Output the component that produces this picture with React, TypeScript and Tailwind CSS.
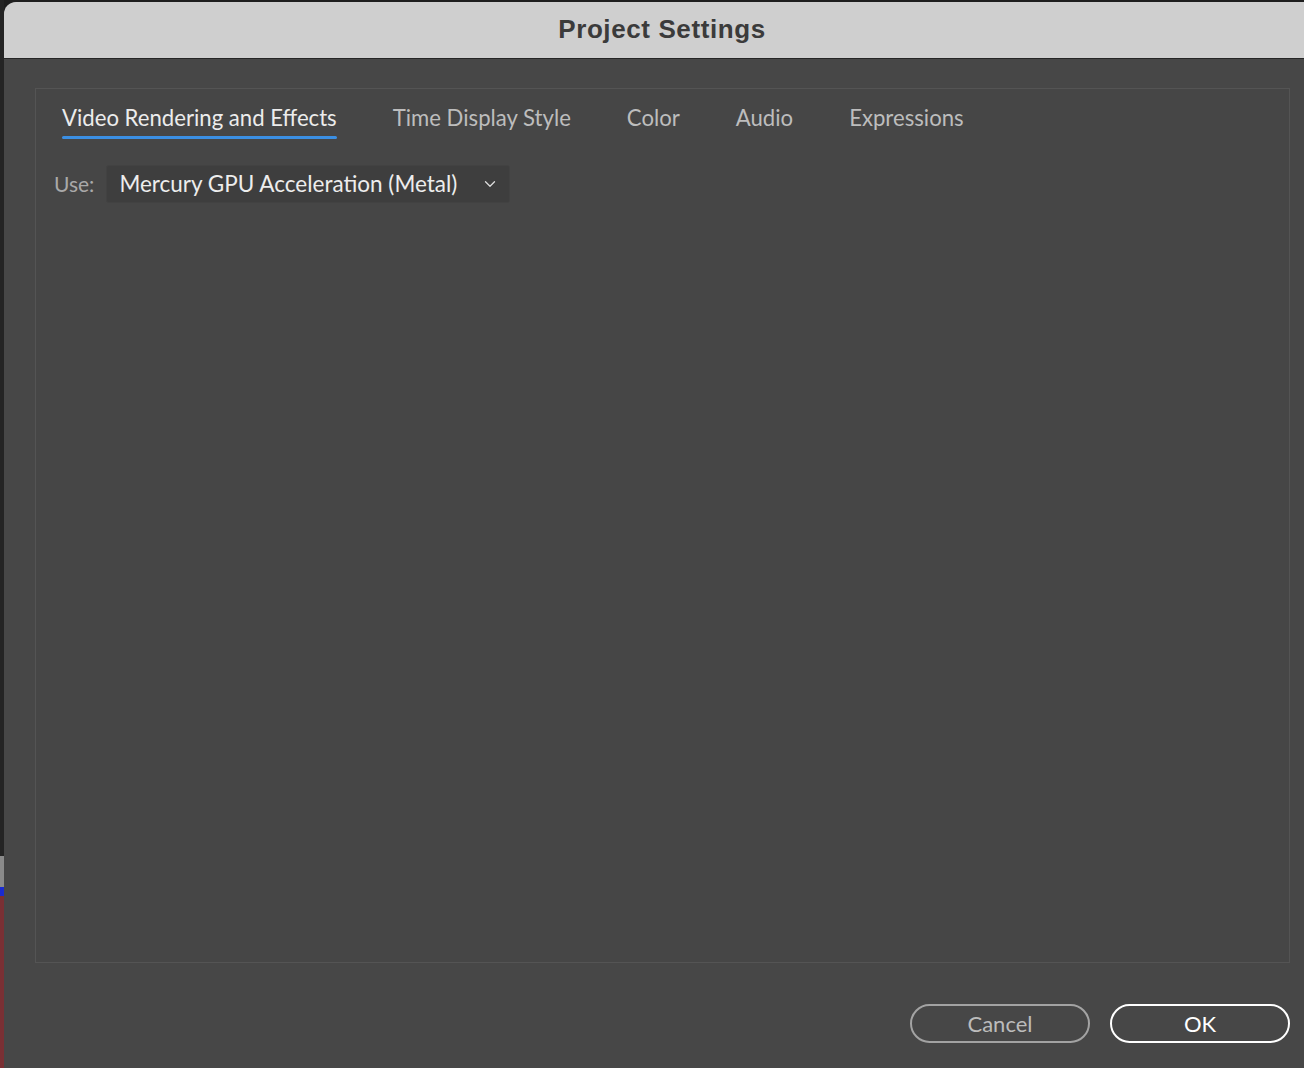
import { ChevronDown } from "lucide-react";

const TABS = ["Video Rendering and Effects", "Time Display Style", "Color", "Audio", "Expressions"];

export default function App() {
  return (
    <div className="flex h-[1068px] w-[1304px] overflow-hidden bg-[#1e1e1e] font-['Lato',sans-serif]">
      {/* background app peeking through on the left */}
      <div className="flex w-[4px] shrink-0 flex-col">
        <div className="h-[856px] bg-[#242424]" />
        <div className="h-[31px] bg-[#8a8a8a]" />
        <div className="h-[9px] bg-[#1a2bd0]" />
        <div className="flex-1 bg-[#7a3034]" />
      </div>

      <div className="mt-[2px] flex flex-1 flex-col overflow-hidden rounded-tl-[12px] bg-[#474747]">
        <div className="flex h-[57px] shrink-0 items-center justify-center border-b border-[#262626] bg-[#cfcfcf] pb-[2px] pl-[16px]">
          <span className="font-['Liberation_Sans',sans-serif] text-[26px] font-bold tracking-[0.6px] text-[#3b3b3b]">Project Settings</span>
        </div>

        <div className="flex flex-1 flex-col pl-[31px] pr-[14px] pt-[29px]">
          <div className="flex h-[875px] flex-col border border-[#545454] bg-[#464646] px-[26px] pt-[14px]">
            <div className="flex gap-[56px]">
              {TABS.map((t, i) => (
                <div key={t} className="flex flex-col">
                  <span className={i === 0 ? "text-[22.15px] leading-[30px] text-[#ececec]" : "text-[22.15px] leading-[30px] text-[#bdbdbd]"}>{t}</span>
                  <div className={i === 0 ? "mt-[3px] h-[3px] rounded-full bg-[#3b8fe3]" : "mt-[3px] h-[3px]"} />
                </div>
              ))}
            </div>

            <div className="-ml-[8px] mt-[26px] flex items-center">
              <span className="text-[21px] text-[#a9a9a9]">Use:</span>
              <div className="ml-[12px] flex h-[38px] w-[404px] items-center rounded-[3px] border border-[#424242] bg-[#3e3e3e] pl-[12px] pr-[10px]">
                <span className="flex-1 text-[22.5px] text-[#ededed]">Mercury GPU Acceleration (Metal)</span>
                <ChevronDown className="size-[18px] text-[#dcdcdc]" strokeWidth={1.75} />
              </div>
            </div>
          </div>

          <div className="mt-[41px] flex justify-end gap-[20px]">
            <button className="flex h-[39px] w-[180px] items-center justify-center rounded-full border-2 border-[#a3a3a3] text-[22px] text-[#bcbcbc]">Cancel</button>
            <button className="flex h-[39px] w-[180px] items-center justify-center rounded-full border-2 border-white text-[22px] text-white">OK</button>
          </div>
        </div>
      </div>
    </div>
  );
}
